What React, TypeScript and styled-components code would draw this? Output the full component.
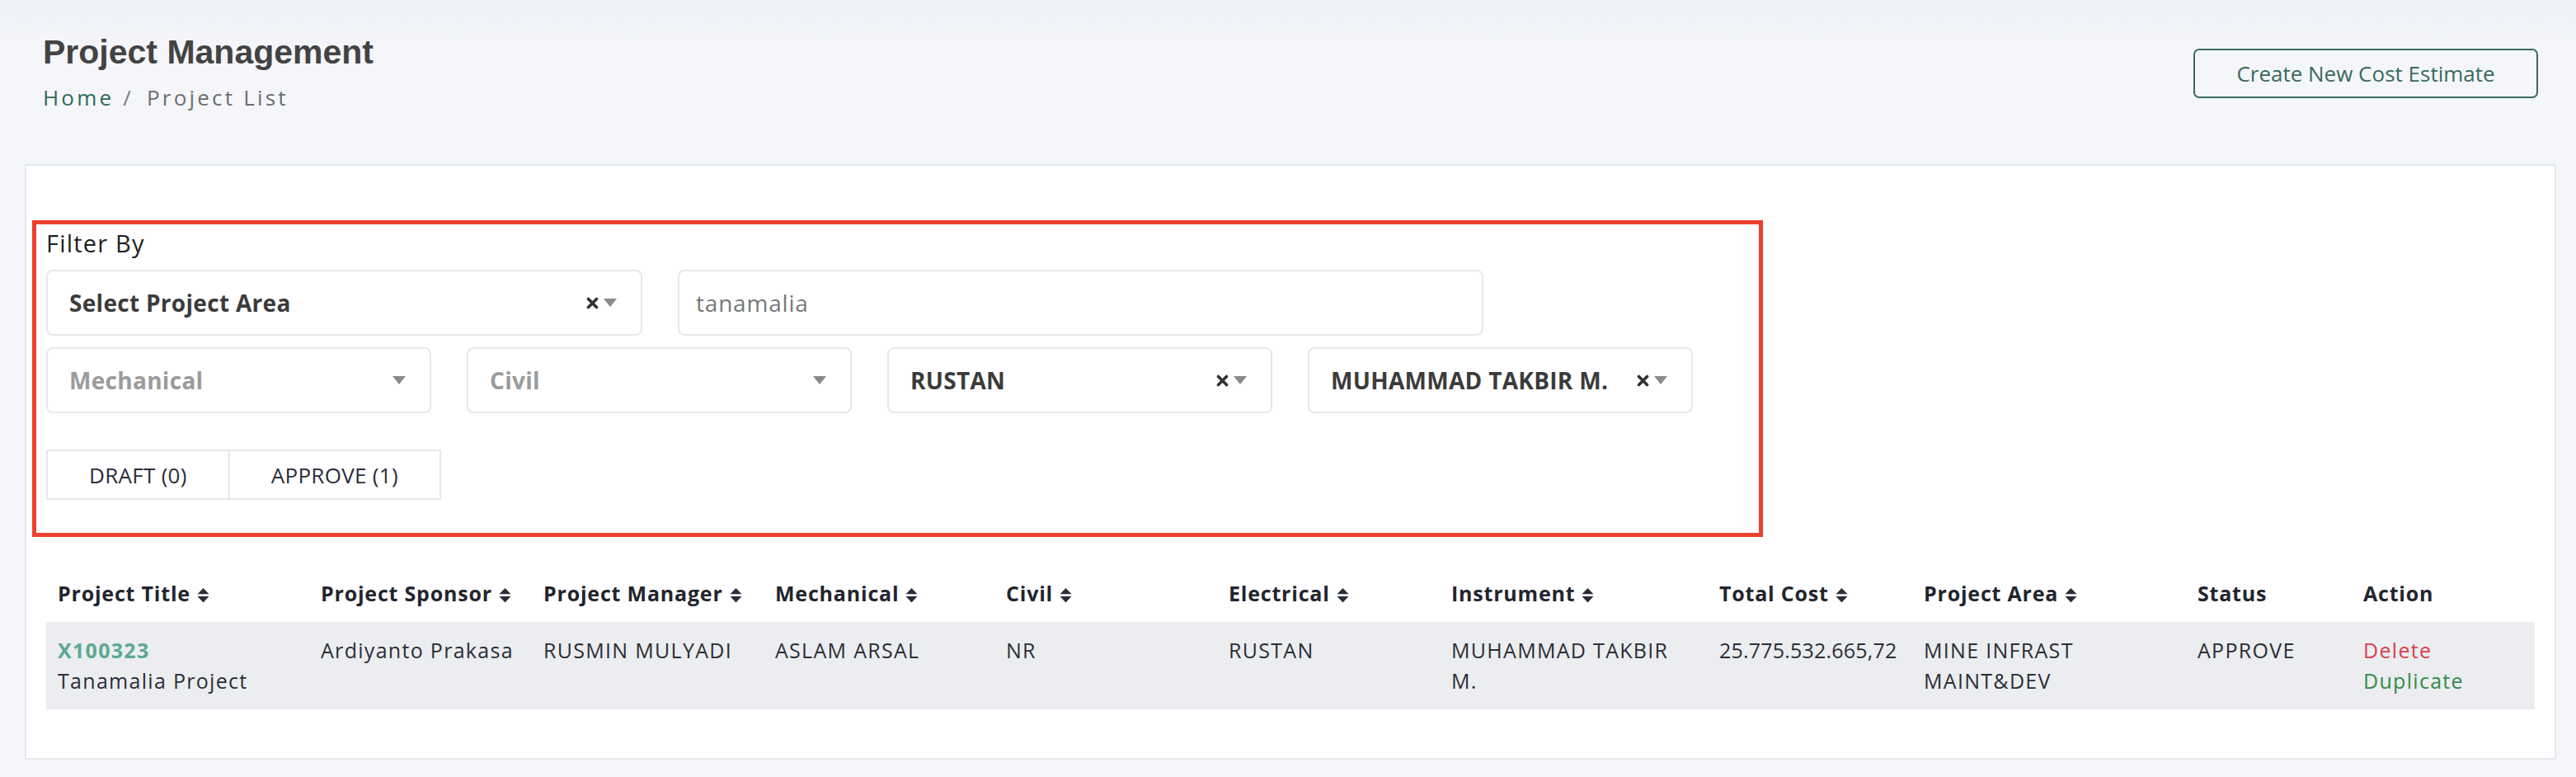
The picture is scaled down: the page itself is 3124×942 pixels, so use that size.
import React from "react";
import styled, { createGlobalStyle } from "styled-components";

const GlobalStyle = createGlobalStyle`
  * { box-sizing: border-box; }
  html {
    min-height: 100%;
    background: #f5f6fa linear-gradient(to bottom, #edf1f9 0px, #f5f6fa 60px) no-repeat;
  }
  body {
    margin: 0;
    font-family: "Open Sans", "Liberation Sans", sans-serif;
    color: #2b2d36;
  }
`;

const Page = styled.div`
  padding: 0 24px 21px 30px;
`;

const Header = styled.header`
  display: flex;
  align-items: center;
  justify-content: space-between;
  padding: 40px 22px 0;
`;

const TitleBlock = styled.div`
  display: flex;
  flex-direction: column;
`;

const Title = styled.h1`
  margin: 0;
  font-family: "Liberation Sans", Arial, sans-serif;
  font-weight: 700;
  font-size: 41px;
  line-height: 47px;
  color: #434343;
`;

const Breadcrumb = styled.nav`
  margin-top: 12px;
  display: flex;
  align-items: baseline;
  font-size: 26px;
  line-height: 38px;
  letter-spacing: 3.2px;
`;

const Crumb = styled.span<{ $active?: boolean }>`
  color: ${(p) => (p.$active ? "#6d6d6d" : "#2f6b58")};
`;

const CrumbSep = styled.span`
  color: #7a7a7a;
  padding: 0 16px 0 11px;
`;

const OutlineButton = styled.button`
  width: 418px;
  height: 60px;
  border: 2px solid #3b6b5c;
  border-radius: 7px;
  background: transparent;
  color: #3b6b5c;
  font-family: "Open Sans", sans-serif;
  font-size: 26px;
  cursor: pointer;
`;

const Card = styled.section`
  margin-top: 62px;
  background: #fff;
  border: 2px solid #e4e9ee;
  padding: 66px 24px 59px;
`;

const FilterBox = styled.div`
  width: 2099px;
  margin-left: -17px;
  border: 5px solid #ec412d;
  padding: 6px 12px 40px;
`;

const FilterLabel = styled.div`
  font-size: 29px;
  line-height: 34px;
  letter-spacing: 1.2px;
  color: #1f1f1f;
`;

const FilterRow = styled.div<{ $mt: number }>`
  display: flex;
  gap: 43px;
  margin-top: ${(p) => p.$mt}px;
`;

const SelectBox = styled.div<{ $width: number; $placeholder?: boolean }>`
  width: ${(p) => p.$width}px;
  height: 80px;
  border: 2px solid #e4e8ec;
  border-radius: 8px;
  display: flex;
  align-items: center;
  justify-content: space-between;
  padding: 0 29px 0 26px;
  font-weight: 700;
  font-size: 28px;
  letter-spacing: 0.3px;
  color: ${(p) => (p.$placeholder ? "#9b9b9b" : "#3b3b3b")};
  white-space: nowrap;
`;

const SelectIcons = styled.span`
  display: flex;
  align-items: center;
  gap: 6px;
`;

const TextInput = styled.input`
  width: 977px;
  height: 80px;
  border: 2px solid #e4e8ec;
  border-radius: 8px;
  padding: 0 20px;
  font-family: "Open Sans", sans-serif;
  font-size: 28px;
  letter-spacing: 0.8px;
  color: #777;
  background: #fff;
  outline: none;
`;

const StatusGroup = styled.div`
  display: flex;
  width: fit-content;
  margin-top: 44px;
  border: 2px solid #e3e8ed;
`;

const StatusButton = styled.button`
  height: 57px;
  padding: 0 50px;
  background: #fff;
  border: none;
  font-family: "Open Sans", sans-serif;
  font-size: 26px;
  letter-spacing: 0.3px;
  color: #2b2d3a;
  & + & {
    border-left: 2px solid #e3e8ed;
  }
`;

const Table = styled.table`
  width: 100%;
  margin-top: 34px;
  border-collapse: collapse;
  table-layout: fixed;
`;

const Th = styled.th`
  text-align: left;
  padding: 16px 20px 16px 14px;
  font-size: 25px;
  line-height: 37px;
  font-weight: 700;
  color: #22252e;
  white-space: nowrap;
  letter-spacing: 0.8px;
`;

const BodyRow = styled.tr`
  background: #ebedf0;
`;

const Td = styled.td<{ $numeric?: boolean }>`
  padding: 16px 20px 16px 14px;
  vertical-align: top;
  font-size: 25px;
  line-height: 37px;
  letter-spacing: ${(p) => (p.$numeric ? "0.2px" : "1.3px")};
  color: #2b2d36;
`;

const Code = styled.div`
  font-weight: 700;
  color: #5ca892;
`;

const ActionLink = styled.div<{ $tone: "danger" | "success" }>`
  color: ${(p) => (p.$tone === "danger" ? "#d8414c" : "#358a4c")};
  cursor: pointer;
`;

const SortSvg = styled.svg`
  margin-left: 8px;
  vertical-align: -2px;
`;

const SortIcon = () => (
  <SortSvg width="15" height="18" viewBox="0 0 15 18">
    <path d="M7.5 0 L14.5 7.2 L0.5 7.2 Z" fill="#2b2e3a" />
    <path d="M0.5 10 L14.5 10 L7.5 17.5 Z" fill="#2b2e3a" />
  </SortSvg>
);

const ClearIcon = () => (
  <svg width="15" height="15" viewBox="0 0 15 15">
    <path d="M2.5 2.5 L12.5 12.5 M12.5 2.5 L2.5 12.5" stroke="#333" strokeWidth="3.6" strokeLinecap="round" />
  </svg>
);

const CaretIcon = () => (
  <svg width="16" height="10" viewBox="0 0 16 10">
    <path d="M0 0 H16 L8 10 Z" fill="#8a8a8a" />
  </svg>
);

type SelectProps = { width: number; label: string; placeholder?: boolean; clearable?: boolean };

const Select = ({ width, label, placeholder, clearable }: SelectProps) => (
  <SelectBox $width={width} $placeholder={placeholder}>
    <span>{label}</span>
    <SelectIcons>
      {clearable && <ClearIcon />}
      <CaretIcon />
    </SelectIcons>
  </SelectBox>
);

const columns: { label: string; width: number; sortable: boolean }[] = [
  { label: "Project Title", width: 319, sortable: true },
  { label: "Project Sponsor", width: 270, sortable: true },
  { label: "Project Manager", width: 281, sortable: true },
  { label: "Mechanical", width: 280, sortable: true },
  { label: "Civil", width: 270, sortable: true },
  { label: "Electrical", width: 270, sortable: true },
  { label: "Instrument", width: 325, sortable: true },
  { label: "Total Cost", width: 248, sortable: true },
  { label: "Project Area", width: 332, sortable: true },
  { label: "Status", width: 201, sortable: false },
  { label: "Action", width: 222, sortable: false },
];

export default function App() {
  return (
    <>
      <GlobalStyle />
      <Page>
        <Header>
          <TitleBlock>
            <Title>Project Management</Title>
            <Breadcrumb>
              <Crumb>Home</Crumb>
              <CrumbSep>/</CrumbSep>
              <Crumb $active>Project List</Crumb>
            </Breadcrumb>
          </TitleBlock>
          <OutlineButton>Create New Cost Estimate</OutlineButton>
        </Header>

        <Card>
          <FilterBox>
            <FilterLabel>Filter By</FilterLabel>
            <FilterRow $mt={15}>
              <Select width={723} label="Select Project Area" clearable />
              <TextInput defaultValue="tanamalia" />
            </FilterRow>
            <FilterRow $mt={14}>
              <Select width={467} label="Mechanical" placeholder />
              <Select width={467} label="Civil" placeholder />
              <Select width={467} label="RUSTAN" clearable />
              <Select width={467} label="MUHAMMAD TAKBIR M." clearable />
            </FilterRow>
            <StatusGroup>
              <StatusButton>DRAFT (0)</StatusButton>
              <StatusButton>APPROVE (1)</StatusButton>
            </StatusGroup>
          </FilterBox>

          <Table>
            <colgroup>
              {columns.map((c) => (
                <col key={c.label} style={{ width: c.width }} />
              ))}
            </colgroup>
            <thead>
              <tr>
                {columns.map((c) => (
                  <Th key={c.label}>
                    {c.label}
                    {c.sortable && <SortIcon />}
                  </Th>
                ))}
              </tr>
            </thead>
            <tbody>
              <BodyRow>
                <Td>
                  <Code>X100323</Code>
                  <div>Tanamalia Project</div>
                </Td>
                <Td>Ardiyanto Prakasa</Td>
                <Td>RUSMIN MULYADI</Td>
                <Td>ASLAM ARSAL</Td>
                <Td>NR</Td>
                <Td>RUSTAN</Td>
                <Td>MUHAMMAD TAKBIR M.</Td>
                <Td $numeric>25.775.532.665,72</Td>
                <Td>MINE INFRAST MAINT&amp;DEV</Td>
                <Td>APPROVE</Td>
                <Td>
                  <ActionLink $tone="danger">Delete</ActionLink>
                  <ActionLink $tone="success">Duplicate</ActionLink>
                </Td>
              </BodyRow>
            </tbody>
          </Table>
        </Card>
      </Page>
    </>
  );
}
